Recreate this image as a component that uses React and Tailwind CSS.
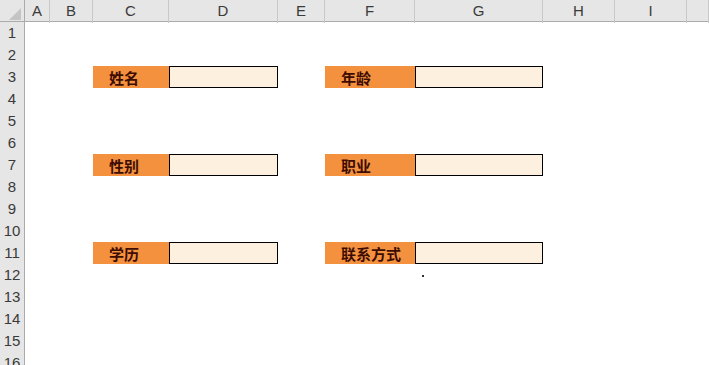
import React from 'react'

// column widths A..I, then J takes what's left
const COLS = ['A', 'B', 'C', 'D', 'E', 'F', 'G', 'H', 'I', 'J']
const GRID = 'grid grid-cols-[25px_25px_43px_76px_109px_47px_90px_128px_72px_72px_1fr]'
const ROWS = Array.from({ length: 16 }, (_, i) => i + 1)

// label/value pairs keyed by row: [left label, right label]
const FIELDS = {
  3: ['姓名', '年龄'],
  7: ['性别', '职业'],
  11: ['学历', '联系方式']
}

const cjk = { fontFamily: '"Noto Sans CJK SC", "Noto Sans", sans-serif' }

function Label({ text }) {
  return (
    <div className="h-[22px] bg-[#f4913f] flex items-center pl-[16px] text-[15px] font-bold text-[#3d0c02] leading-none" style={cjk}>
      {text}
    </div>
  )
}

function Input() {
  return <div className="h-[22px] border border-black bg-[#fdf0df]" />
}

function Row({ n }) {
  const f = FIELDS[n]
  return (
    <div className={`${GRID} h-[22px]`}>
      <div className="bg-[#e6e6e6] border-r border-r-[#ababab] border-b border-b-[#d2d2d2] flex items-center justify-center text-[15px] text-[#3a3a3a]">
        {n}
      </div>
      <div />
      <div />
      {f ? <Label text={f[0]} /> : <div />}
      {f ? <Input /> : <div />}
      <div />
      {f ? <Label text={f[1]} /> : <div />}
      {f ? <Input /> : n === 12 ? (
        <div className="pt-[11px] pl-[7px]"><div className="w-[2px] h-[2px] bg-[#333]" /></div>
      ) : <div />}
      <div />
      <div />
      <div />
    </div>
  )
}

export default function App() {
  return (
    <div className="w-[709px] h-[365px] overflow-hidden bg-white" style={{ fontFamily: '"Liberation Sans", Arial, sans-serif' }}>
      <div className={`${GRID} h-[22px] bg-[#e6e6e6] border-b border-[#ababab]`}>
        <div className="relative border-r border-[#ababab]">
          <svg className="absolute right-[3px] bottom-[3px]" width="12" height="12" viewBox="0 0 12 12">
            <polygon points="12,0 12,12 0,12" fill="#c4c4c4" />
          </svg>
        </div>
        {COLS.map((c) => (
          <div key={c} className="border-r border-[#c8c8c8] flex items-center justify-center text-[15px] text-[#3a3a3a]">
            {c === 'J' ? '' : c}
          </div>
        ))}
      </div>
      {ROWS.map((n) => <Row key={n} n={n} />)}
    </div>
  )
}
